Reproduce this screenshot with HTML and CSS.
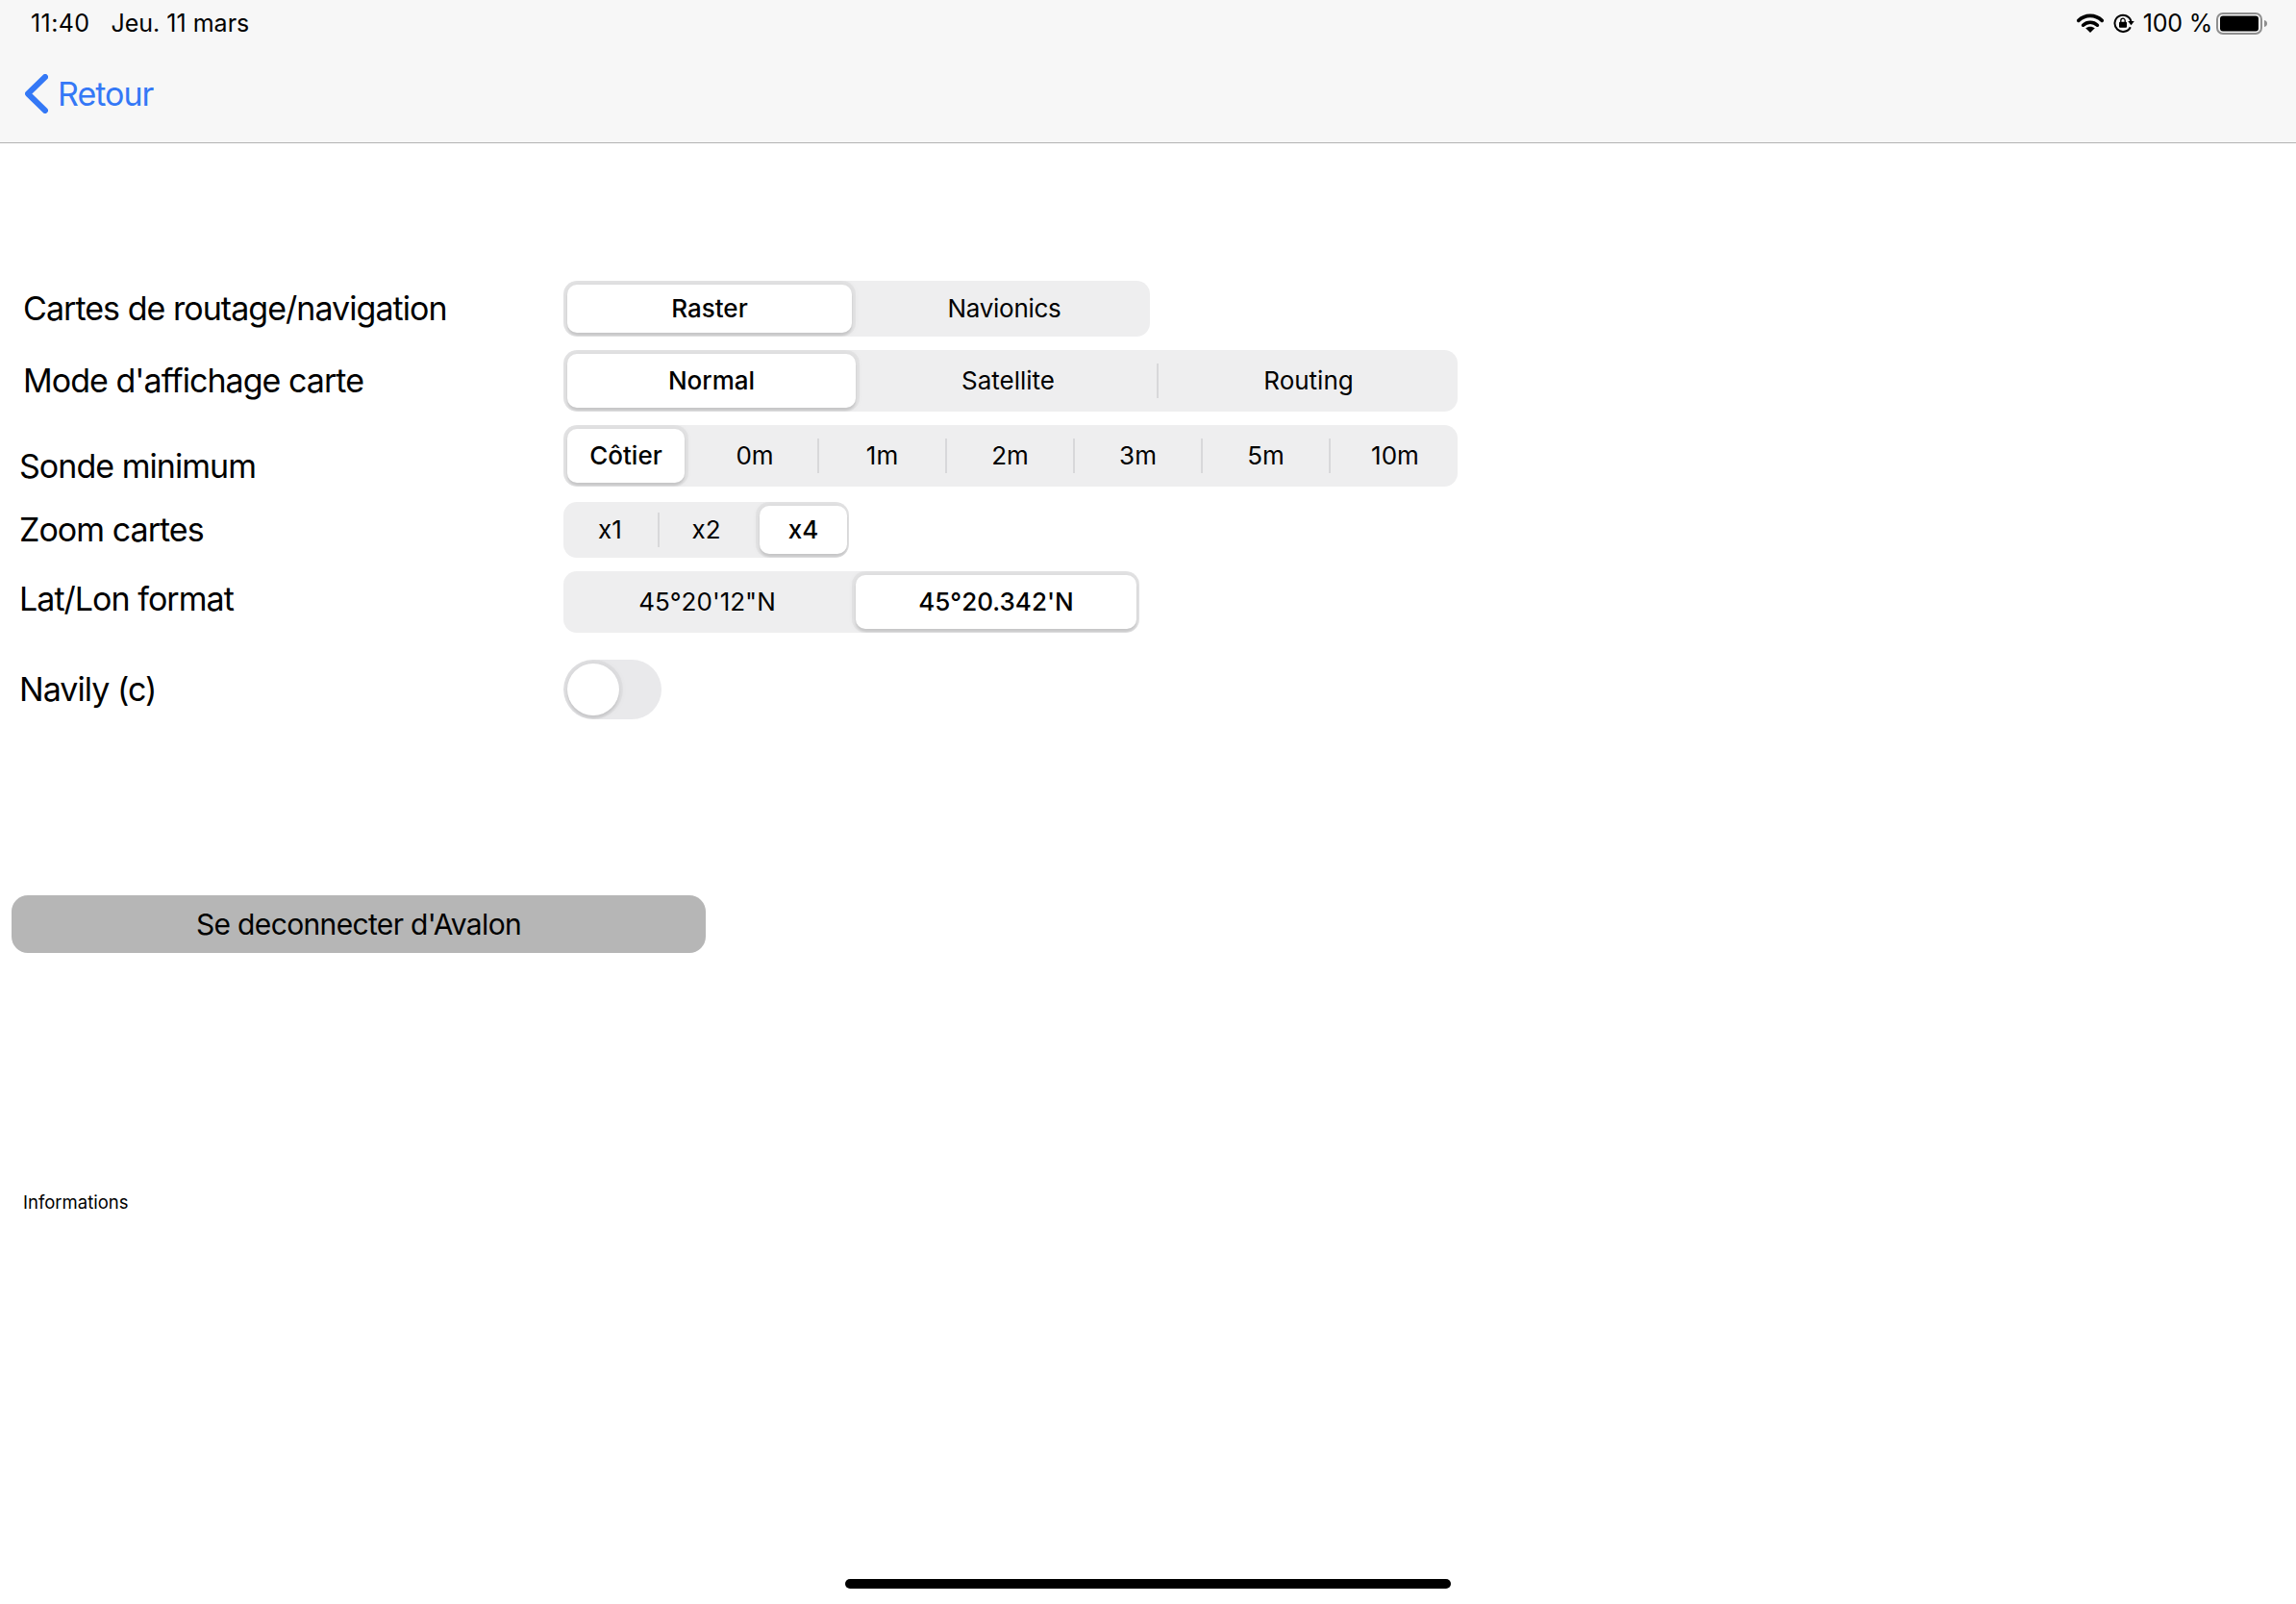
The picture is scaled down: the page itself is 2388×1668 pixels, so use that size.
FILE: index.html
```html
<!DOCTYPE html>
<html lang="fr">
<head>
<meta charset="utf-8">
<title>Réglages</title>
<link rel="stylesheet" href="styles.css">
</head>
<body>
<header class="topbar">
  <div class="status">
    <div class="status-left"><span class="time">11:40</span><span>Jeu. 11 mars</span></div>
    <div class="status-right">
      <svg class="ic-wifi" width="28" height="20" viewBox="0 0 28 20"><path d="M1.800 7.400C8.600.7 19.400.7 26.200 7.400" fill="none" stroke="#000" stroke-width="3.600" stroke-linecap="round"/><path d="M6.600 12.200c4.200-4 10.600-4 14.800 0" fill="none" stroke="#000" stroke-width="3.600" stroke-linecap="round"/><path d="M14 20l-4.800-4.700c2.700-2.200 6.900-2.200 9.600 0z" fill="#000"/></svg>
      <svg class="ic-lock" width="22" height="20" viewBox="0 0 22 20"><path d="M17.800 14.200A8.600 8.600 0 1 1 18.500 8.500" fill="none" stroke="#000" stroke-width="2"/><path d="M15.200 8h6.600l-3.300 4.200z" fill="#000"/><rect x="6" y="8.800" width="8" height="6" rx="1" fill="#000"/><path d="M7.800 9V7.400a2.200 2.200 0 0 1 4.400 0V9" fill="none" stroke="#000" stroke-width="1.300"/></svg>
      <span class="pct">100 %</span>
      <svg class="ic-batt" width="54" height="23" viewBox="0 0 54 23"><rect x="1" y="1" width="46" height="21" rx="6" fill="none" stroke="#8f8f8f" stroke-width="2"/><rect x="4" y="3.500" width="40" height="16" rx="3" fill="#000"/><path d="M50 8c2 .5 3 1.800 3 3.500s-1 3-3 3.500z" fill="#8f8f8f"/></svg>
    </div>
  </div>
  <nav class="nav">
    <svg class="chev" width="24" height="41" viewBox="0 0 24 41"><path d="M21 3 3 20.500 21 38" fill="none" stroke="#3478f6" stroke-width="6" stroke-linecap="round" stroke-linejoin="round"/></svg>
    <span class="back">Retour</span>
  </nav>
</header>

<main class="content">
  <section class="settings">
    <div class="row row-1">
      <span class="label">Cartes de routage/navigation</span>
      <div class="seg seg-1">
        <div class="opt on w-raster">Raster</div>
        <div class="opt w-navionics">Navionics</div>
      </div>
    </div>
    <div class="row row-2">
      <span class="label">Mode d'affichage carte</span>
      <div class="seg seg-2">
        <div class="opt on w-normal">Normal</div>
        <div class="opt w-sat">Satellite</div>
        <i class="sep"></i>
        <div class="opt w-rout">Routing</div>
      </div>
    </div>
    <div class="row row-3">
      <span class="label">Sonde minimum</span>
      <div class="seg seg-3">
        <div class="opt on w-cot">Côtier</div>
        <div class="opt w-0m">0m</div><i class="sep"></i>
        <div class="opt w-m">1m</div><i class="sep"></i>
        <div class="opt w-m">2m</div><i class="sep"></i>
        <div class="opt w-m">3m</div><i class="sep"></i>
        <div class="opt w-m">5m</div><i class="sep"></i>
        <div class="opt w-m w-last">10m</div>
      </div>
    </div>
    <div class="row row-4">
      <span class="label">Zoom cartes</span>
      <div class="seg seg-4">
        <div class="opt w-x1">x1</div><i class="sep"></i>
        <div class="opt w-x2">x2</div>
        <div class="opt on w-x4">x4</div>
      </div>
    </div>
    <div class="row row-5">
      <span class="label">Lat/Lon format</span>
      <div class="seg seg-5">
        <div class="opt w-dms">45°20'12"N</div>
        <div class="opt on w-dm">45°20.342'N</div>
      </div>
    </div>
    <div class="row row-6">
      <span class="label">Navily (c)</span>
      <div class="toggle"><span class="knob"></span></div>
    </div>
  </section>
  <button class="logout">Se deconnecter d'Avalon</button>
  <p class="info">Informations</p>
</main>
<div class="home"></div>
</body>
</html>
```
FILE: styles.css
```css
* { box-sizing: border-box; }
html, body { margin: 0; padding: 0; }
body {
  width: 2388px;
  height: 1668px;
  position: relative;
  overflow: hidden;
  background: #fff;
  color: #000;
  font-family: Inter, "Liberation Sans", sans-serif;
}
.topbar {
  height: 149px;
  background: #f7f7f7;
  border-bottom: 1px solid #b2b2b2;
}
.status {
  height: 48px;
  display: flex;
  justify-content: space-between;
  align-items: center;
  padding: 0 29px 0 32px;
  font-size: 25px;
}
.status-left { display: flex; gap: 22px; }
.time { letter-spacing: .4px; }
.status-right { display: flex; align-items: center; }
.ic-wifi { margin-right: 10px; }
.ic-lock { margin-right: 9px; }
.pct { margin-right: 4px; letter-spacing: -.2px; }
.nav {
  height: 100px;
  display: flex;
  align-items: center;
  padding-left: 26px;
  padding-bottom: 1px;
  gap: 10px;
}
.back { color: #3478f6; font-size: 34px; letter-spacing: -1px; }
.content { padding-top: 143px; }
.settings { display: flex; flex-direction: column; }
.row { display: flex; align-items: center; }
.label { font-size: 34px; letter-spacing: -.96px; width: 586px; flex: none; line-height: 40px; }
.row-1 .label, .row-2 .label { padding-left: 24px; }
.row-3 .label, .row-4 .label, .row-5 .label, .row-6 .label { padding-left: 20px; }
.row-2 .label { margin-bottom: 1px; }
.row-3 .label { margin-top: 22px; }
.row-5 .label { margin-bottom: 6px; }
.row-2 { margin-top: 14px; }
.row-3 { margin-top: 14px; }
.row-4 { margin-top: 16px; }
.row-5 { margin-top: 14px; }
.row-6 { margin-top: 28px; }
.seg {
  display: flex;
  align-items: center;
  background: #eeeeef;
  border-radius: 14px;
  padding: 4px;
  font-size: 26px;
  overflow: hidden;
}
.seg-1 { width: 610px; height: 58px; }
.seg-2, .seg-3 { width: 930px; height: 64px; }
.seg-4 { width: 297px; height: 58px; }
.seg-5 { width: 599px; height: 64px; }
.opt {
  height: 100%;
  flex: none;
  display: flex;
  align-items: center;
  justify-content: center;
  padding-bottom: 2px;
}
.opt.on {
  position: relative;
  background: #fff;
  border-radius: 10px;
  font-weight: 500;
  box-shadow: 0 3px 2px rgba(0,0,0,.1), 0 0 0 4px rgba(0,0,0,.035), 0 0 8px 1px rgba(0,0,0,.06);
}
.sep { flex: none; width: 2px; height: 36px; background: #d8d8da; }
.w-raster { width: 296px; }
.w-navionics { width: 306px; padding-left: 11px; letter-spacing: -.3px; }
.w-normal { width: 300px; }
.w-sat { width: 313px; padding-left: 4px; }
.w-rout { width: 309px; padding-left: 3px; }
.w-cot { width: 122px; }
.w-0m { width: 138px; padding-left: 8px; }
.w-m { width: 131px; }
.w-last { padding-left: 3px; }
.w-x1 { width: 94px; padding-right: 5px; }
.w-x2 { width: 104px; padding-right: 7px; }
.w-x4 { width: 91px; }
.w-dms { width: 300px; padding-right: 9px; }
.w-dm { width: 292px; }
.toggle {
  width: 102px;
  height: 62px;
  border-radius: 31px;
  background: #e9e9eb;
  padding: 4px;
  overflow: hidden;
}
.knob {
  display: block;
  width: 54px;
  height: 54px;
  border-radius: 50%;
  background: #fff;
  box-shadow: 0 3px 2px rgba(0,0,0,.08), 0 0 0 4px rgba(0,0,0,.03), 0 0 8px 1px rgba(0,0,0,.06);
}
.logout {
  display: block;
  margin: 183px 0 0 12px;
  width: 722px;
  height: 60px;
  border: 0;
  border-radius: 17px;
  background: #b6b6b6;
  color: #000;
  font-family: inherit;
  font-size: 30px;
  letter-spacing: -.65px;
}
.info { margin: 248px 0 0 24px; font-size: 18.5px; line-height: 22px; }
.home {
  position: absolute;
  left: 879px;
  top: 1642px;
  width: 630px;
  height: 10px;
  border-radius: 5px;
  background: #000;
}
```
